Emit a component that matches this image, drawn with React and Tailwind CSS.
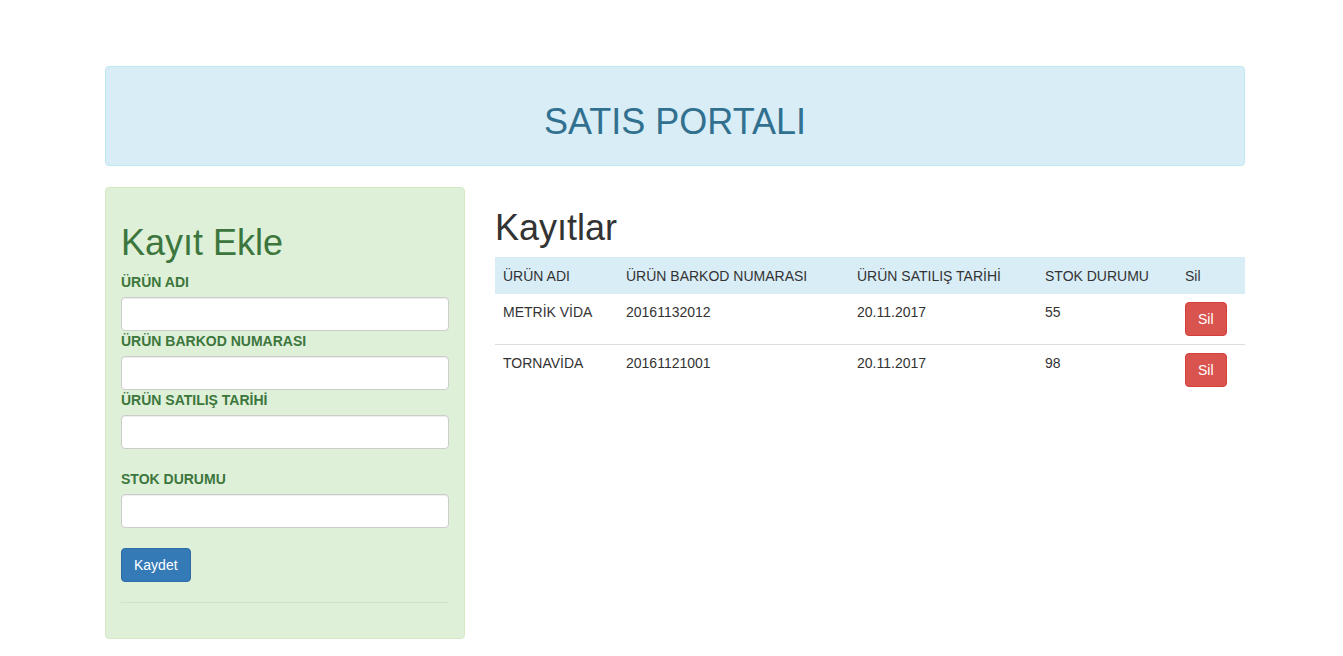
import React from 'react';

const rows = [
  { name: 'METRİK VİDA', barcode: '20161132012', date: '20.11.2017', stock: '55' },
  { name: 'TORNAVİDA', barcode: '20161121001', date: '20.11.2017', stock: '98' },
];

function Field({ label, extraTop }) {
  return (
    <div className={extraTop ? 'mt-5' : ''}>
      <label className="block mb-[5px] text-[14px] leading-5 font-bold text-[#3c763d]">{label}</label>
      <input
        type="text"
        className="block w-full h-[34px] px-3 bg-white border border-[#ccc] rounded-[4px] shadow-[inset_0_1px_1px_rgba(0,0,0,0.075)] outline-none"
      />
    </div>
  );
}

export default function App() {
  return (
    <div className="min-h-screen bg-white font-['Liberation_Sans',Arial,sans-serif] text-[14px] text-[#333]">
      <div className="w-[1140px] ml-[105px] pt-[66px]">
        {/* Header */}
        <div className="h-[100px] bg-[#d9edf7] border border-[#bce8f1] rounded-[4px] pt-[35px]">
          <h1 className="text-center text-[36px] leading-[40px] text-[#31708f]">SATIS PORTALI</h1>
        </div>

        <div className="flex mt-[21px]">
          {/* Form panel */}
          <div className="w-[360px] shrink-0 bg-[#dff0d8] border border-[#d6e9c6] rounded-[4px] px-[15px] pt-[35px] pb-[15px]">
            <h2 className="text-[36px] leading-[40px] text-[#3c763d] mb-[9px]">Kayıt Ekle</h2>
            <Field label="ÜRÜN ADI" />
            <Field label="ÜRÜN BARKOD NUMARASI" />
            <Field label="ÜRÜN SATILIŞ TARİHİ" />
            <Field label="STOK DURUMU" extraTop />
            <button className="mt-5 h-[34px] px-3 bg-[#337ab7] border border-[#2e6da4] rounded-[4px] text-white text-[14px]">
              Kaydet
            </button>
            <hr className="mt-5 mb-5 border-0 border-t border-[#d0e4c4]" />
          </div>

          {/* Records */}
          <div className="flex-1 pl-[30px]">
            <h2 className="mt-[21px] mb-[9px] text-[36px] leading-[40px] text-[#333]">Kayıtlar</h2>
            <table className="w-full border-collapse">
              <thead>
                <tr className="bg-[#d9edf7]">
                  <th className="w-[123px] px-2 py-2 h-[37px] text-left font-normal leading-5">ÜRÜN ADI</th>
                  <th className="w-[231px] px-2 py-2 text-left font-normal leading-5">ÜRÜN BARKOD NUMARASI</th>
                  <th className="w-[188px] px-2 py-2 text-left font-normal leading-5">ÜRÜN SATILIŞ TARİHİ</th>
                  <th className="w-[140px] px-2 py-2 text-left font-normal leading-5">STOK DURUMU</th>
                  <th className="px-2 py-2 text-left font-normal leading-5">Sil</th>
                </tr>
              </thead>
              <tbody>
                {rows.map((r, i) => (
                  <tr key={r.barcode} className={i > 0 ? 'border-t border-[#ddd]' : ''}>
                    <td className="px-2 pt-2 pb-2 align-top leading-5">{r.name}</td>
                    <td className="px-2 pt-2 pb-2 align-top leading-5">{r.barcode}</td>
                    <td className="px-2 pt-2 pb-2 align-top leading-5">{r.date}</td>
                    <td className="px-2 pt-2 pb-2 align-top leading-5">{r.stock}</td>
                    <td className="px-2 pt-2 pb-2 align-top">
                      <button className="h-[34px] px-3 bg-[#d9534f] border border-[#d43f3a] rounded-[4px] text-white text-[14px]">
                        Sil
                      </button>
                    </td>
                  </tr>
                ))}
              </tbody>
            </table>
          </div>
        </div>
      </div>
    </div>
  );
}
